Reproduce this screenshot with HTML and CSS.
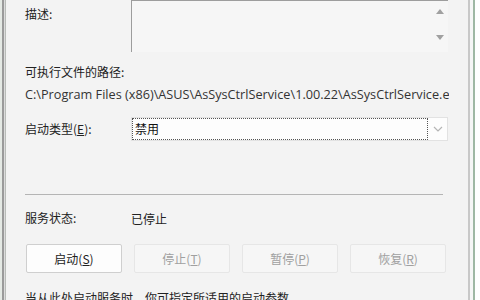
FILE: index.html
```html
<!DOCTYPE html>
<html lang="zh-CN">
<head>
  <meta charset="UTF-8">
  <title>服务属性</title>
  <link rel="stylesheet" href="styles.css">
</head>
<body>
  <div class="window">
    <div class="row desc-row">
      <span class="label">描述:</span>
      <div class="desc-box">
        <div class="scroll">
          <span class="arrow-up"></span>
          <span class="arrow-down"></span>
        </div>
      </div>
    </div>

    <div class="path-label">可执行文件的路径:</div>
    <div class="path">C:\Program Files (x86)\ASUS\AsSysCtrlService\1.00.22\AsSysCtrlService.exe</div>

    <div class="row type-row">
      <span class="label">启动类型(<u>E</u>):</span>
      <div class="combo">
        <div class="combo-text">禁用</div>
        <div class="combo-btn">
          <svg width="10" height="6" viewBox="0 0 10 6"><path d="M1 1 L5 5 L9 1" fill="none" stroke="#b5b5b5" stroke-width="1.2"/></svg>
        </div>
      </div>
    </div>

    <div class="sep"></div>

    <div class="row status-row">
      <span class="label">服务状态:</span>
      <span class="value">已停止</span>
    </div>

    <div class="buttons">
      <button class="btn">启动(<u>S</u>)</button>
      <button class="btn" disabled>停止(<u>T</u>)</button>
      <button class="btn" disabled>暂停(<u>P</u>)</button>
      <button class="btn" disabled>恢复(<u>R</u>)</button>
    </div>

    <p class="hint">当从此处启动服务时，你可指定所适用的启动参数。</p>
  </div>
</body>
</html>
```
FILE: styles.css
```css
html, body {
  margin: 0;
  padding: 0;
}

body {
  width: 480px;
  height: 300px;
  overflow: hidden;
  font-family: "Noto Sans CJK SC", "Noto Sans", sans-serif;
  font-size: 12px;
  color: #222;
}

.window {
  height: 300px;
  box-sizing: border-box;
  padding-left: 25px;
  background: linear-gradient(to right,
    #e4e9e4 0 2px, #9a9a9a 2px 4px, #dcdcdc 4px 5px, #b8bcb8 5px 6px, #f3f3f3 6px 468px,
    #c8c8c8 468px 470px, #f6f6f6 470px 473px, #9fb8a4 473px 475px, #ffffff 475px);
}

.row {
  display: flex;
}

.label {
  width: 106px;
  flex: none;
  line-height: 16px;
}

.desc-row {
  height: 52px;
}

.desc-row .label {
  padding-top: 6px;
}

.desc-box {
  width: 317px;
  height: 52px;
  box-sizing: border-box;
  border-top: 1px solid #9d9d9d;
  border-left: 1px solid #9d9d9d;
  background: #f6f6f6;
  display: flex;
  justify-content: flex-end;
}

.scroll {
  width: 17px;
  display: flex;
  flex-direction: column;
  justify-content: space-between;
  align-items: center;
  padding: 8px 0 12px;
}

.arrow-up {
  width: 0;
  height: 0;
  border-left: 4px solid transparent;
  border-right: 4px solid transparent;
  border-bottom: 5px solid #a0a0a0;
}

.arrow-down {
  width: 0;
  height: 0;
  border-left: 4px solid transparent;
  border-right: 4px solid transparent;
  border-top: 5px solid #a0a0a0;
}

.path-label {
  margin-top: 12px;
  line-height: 16px;
}

.path {
  margin-top: 5px;
  font-family: "Open Sans", "Noto Sans", sans-serif;
  font-size: 12.7px;
  line-height: 18px;
  color: #333;
  white-space: nowrap;
  overflow: hidden;
  width: 424px;
}

.type-row {
  margin-top: 14px;
  align-items: center;
}

.combo {
  width: 317px;
  height: 24px;
  box-sizing: border-box;
  border: 1px solid #e2e2e2;
  background: #fdfdfd;
  display: flex;
}

.combo-text {
  width: 296px;
  height: 22px;
  box-sizing: border-box;
  border: 1px dotted #555;
  padding-left: 2px;
  line-height: 20px;
  color: #111;
}

.combo-btn {
  flex: 1;
  display: flex;
  align-items: center;
  justify-content: center;
}

.sep {
  margin-top: 53px;
  width: 418px;
  height: 1px;
  background: #b4b4b4;
}

.status-row {
  margin-top: 15px;
}

.buttons {
  margin-top: 17px;
  display: flex;
  gap: 12px;
  padding-left: 1px;
}

.btn {
  width: 96px;
  height: 29px;
  box-sizing: border-box;
  border: 1px solid #cfcfcf;
  border-radius: 2px;
  background: #fdfdfd;
  font-family: "Noto Sans CJK SC", "Noto Sans", sans-serif;
  font-size: 12px;
  color: #222;
  padding: 0;
}

.btn:disabled {
  background: #f6f6f6;
  border-color: #e6e6e6;
  color: #a0a0a0;
}

.hint {
  margin: 17px 0 0;
  line-height: 16px;
}
```
